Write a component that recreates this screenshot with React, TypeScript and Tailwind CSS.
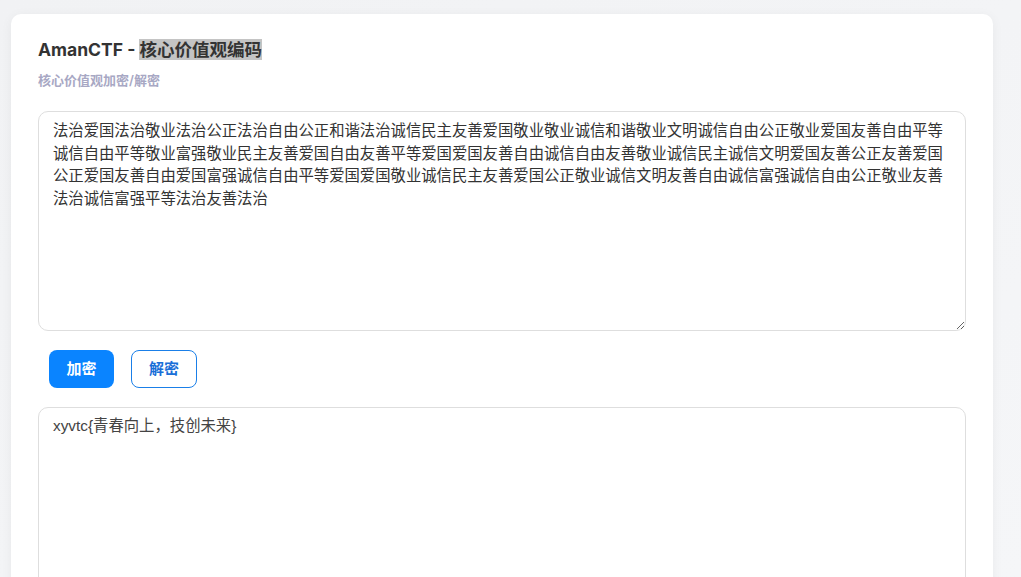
import React from "react";

const cipher =
  "法治爱国法治敬业法治公正法治自由公正和谐法治诚信民主友善爱国敬业敬业诚信和谐敬业文明诚信自由公正敬业爱国友善自由平等诚信自由平等敬业富强敬业民主友善爱国自由友善平等爱国爱国友善自由诚信自由友善敬业诚信民主诚信文明爱国友善公正友善爱国公正爱国友善自由爱国富强诚信自由平等爱国爱国敬业诚信民主友善爱国公正敬业诚信文明友善自由诚信富强诚信自由公正敬业友善法治诚信富强平等法治友善法治";

export default function App() {
  return (
    <div className="min-h-screen h-[577px] overflow-hidden bg-gradient-to-br from-[#f1f2f4] to-[#f5f6f8] pt-[14px] pl-[11px]">
      <div className="w-[982px] h-[600px] bg-white rounded-[10px] shadow-[0_2px_12px_rgba(0,0,0,0.05)] px-[27px] pt-[24px] font-['Inter','Noto_Sans_CJK_SC',sans-serif]">
        <h1 className="text-[17.5px] leading-[24px] font-bold text-[#333]">
          AmanCTF - <span className="bg-[#c4c4c4]">核心价值观编码</span>
        </h1>
        <p className="mt-[8px] text-[13px] leading-[20px] font-semibold text-[#a8a8c4]">
          核心价值观加密/解密
        </p>
        <textarea
          className="mt-[21px] block w-[928px] h-[220px] rounded-[10px] border border-[#dedede] px-[14px] py-[8px] text-[15.35px] leading-[22.6px] text-[#333] outline-none font-['Liberation_Sans','Noto_Sans_CJK_SC',sans-serif]"
          defaultValue={cipher}
        />
        <div className="mt-[19px] ml-[11px] flex gap-[17px]">
          <button className="w-[65px] h-[38px] rounded-[8px] bg-[#0a84ff] text-white text-[15px] font-bold">
            加密
          </button>
          <button className="w-[66px] h-[38px] rounded-[8px] border border-[#1a7fe8] bg-white text-[#1a6fd8] text-[15px] font-bold">
            解密
          </button>
        </div>
        <textarea
          className="mt-[19px] block w-[928px] h-[220px] rounded-[10px] border border-[#dedede] px-[14px] py-[7px] text-[15.35px] leading-[22.6px] text-[#444] outline-none font-['Liberation_Sans','Noto_Sans_CJK_SC',sans-serif]"
          defaultValue="xyvtc{青春向上，技创未来}"
        />
      </div>
    </div>
  );
}
